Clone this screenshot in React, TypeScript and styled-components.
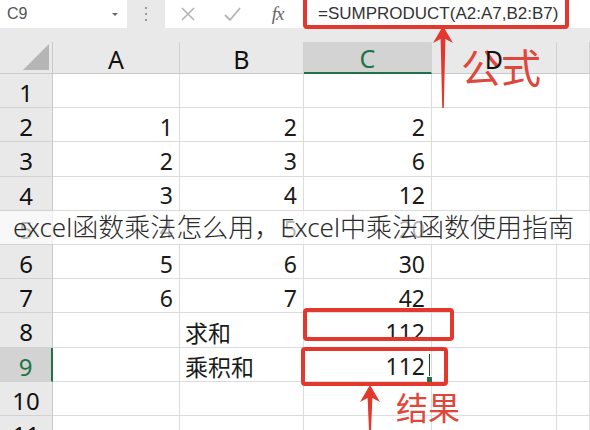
import React from 'react';
import styled, { createGlobalStyle } from 'styled-components';

const GlobalStyle = createGlobalStyle`
  html, body {
    margin: 0;
    padding: 0;
    background: #fff;
  }
`;

const CJK = `"Noto Sans", "Noto Sans CJK SC", sans-serif`;
const GREEN = '#217346';
const RED = '#e2382e';

const Page = styled.div`
  position: relative;
  width: 590px;
  height: 430px;
  overflow: hidden;
  background: #fff;
  font-family: ${CJK};
`;

const FormulaBar = styled.div`
  display: flex;
  align-items: flex-start;
  height: 42px;
  background: #e9e9e9;
`;

const NameBox = styled.div`
  display: flex;
  align-items: center;
  justify-content: space-between;
  box-sizing: border-box;
  width: 127px;
  height: 28px;
  padding: 0 9px 0 7px;
  background: #fff;
  font-family: 'Liberation Sans', Arial, sans-serif;
  font-size: 16px;
  color: #555;
`;

const DropArrow = styled.span`
  width: 0;
  height: 0;
  border-left: 3px solid transparent;
  border-right: 3px solid transparent;
  border-top: 3px solid #666;
`;

const Grip = styled.div`
  display: flex;
  flex-direction: column;
  align-items: center;
  justify-content: center;
  gap: 4px;
  width: 38px;
  height: 28px;

  span {
    width: 2px;
    height: 2px;
    background: #9a9a9a;
  }
`;

const FormulaInput = styled.div`
  flex: 1;
  display: flex;
  align-items: center;
  height: 28px;
  background: #fff;
`;

const BarButton = styled.div<{ $dark?: boolean }>`
  display: flex;
  align-items: center;
  justify-content: center;
  width: 45px;
  height: 28px;
  color: ${(p) => (p.$dark ? '#666' : '#b4b4b4')};
`;

const Fx = styled.span`
  font-family: 'Liberation Serif', 'Times New Roman', serif;
  font-style: italic;
  font-size: 19px;
  letter-spacing: -1px;
`;

const FormulaText = styled.div`
  padding-left: 18px;
  font-family: 'Liberation Sans', Arial, sans-serif;
  font-size: 17px;
  color: #333;
`;

const Sheet = styled.div`
  display: grid;
  grid-template-columns: 53px 127px 124px 128px 125px 1fr;
  grid-auto-rows: 34.2px;
  grid-template-rows: 32px;
`;

const Corner = styled.div`
  position: relative;
  background: #e9e9e9;
  border-right: 1px solid #c9c9c9;
  border-bottom: 1px solid #c9c9c9;

  &::after {
    content: '';
    position: absolute;
    right: 3px;
    bottom: 3px;
    border-left: 26px solid transparent;
    border-bottom: 26px solid #b5b5b5;
  }
`;

const ColHead = styled.div<{ $active?: boolean }>`
  display: flex;
  align-items: center;
  justify-content: center;
  box-sizing: border-box;
  padding-top: 2px;
  background: ${(p) => (p.$active ? '#d3d3d3' : '#e9e9e9')};
  border-right: 1px solid #d2d2d2;
  border-bottom: ${(p) => (p.$active ? `2px solid ${GREEN}` : '1px solid #c9c9c9')};
  font-size: 25px;
  color: ${(p) => (p.$active ? GREEN : '#111')};
`;

// header letters sit above the red annotation text, as in the screenshot
const HeadText = styled.span`
  position: relative;
  z-index: 3;
`;

const RowHead = styled.div<{ $active?: boolean }>`
  display: flex;
  align-items: center;
  justify-content: center;
  box-sizing: border-box;
  padding-top: 4px;
  background: ${(p) => (p.$active ? '#d3d3d3' : '#e9e9e9')};
  border-right: ${(p) => (p.$active ? `2px solid ${GREEN}` : '1px solid #c9c9c9')};
  border-bottom: 1px solid #d2d2d2;
  font-size: 24px;
  color: ${(p) => (p.$active ? GREEN : '#111')};
`;

const Cell = styled.div<{ $left?: boolean }>`
  position: relative;
  display: flex;
  align-items: center;
  justify-content: ${(p) => (p.$left ? 'flex-start' : 'flex-end')};
  box-sizing: border-box;
  padding: 4px 6px 0 5px;
  border-right: 1px solid #dcdcdc;
  border-bottom: 1px solid #dcdcdc;
  font-size: 23px;
  color: #1a1a1a;
  white-space: nowrap;
`;

const Caret = styled.span`
  position: absolute;
  right: 1px;
  top: 6px;
  width: 1.5px;
  height: 24px;
  background: #1d4d33;
`;

const FillHandle = styled.span`
  position: absolute;
  right: -2px;
  bottom: -2px;
  width: 5px;
  height: 5px;
  background: ${GREEN};
  border: 1px solid #fff;
`;

const RedBox = styled.div<{ $x: number; $y: number; $w: number; $h: number }>`
  position: absolute;
  z-index: 4;
  left: ${(p) => p.$x}px;
  top: ${(p) => p.$y}px;
  width: ${(p) => p.$w}px;
  height: ${(p) => p.$h}px;
  box-sizing: border-box;
  border: 4px solid ${RED};
  border-radius: 4px;
`;

const Label = styled.div<{ $x: number; $y: number; $size: number }>`
  position: absolute;
  z-index: 2;
  left: ${(p) => p.$x}px;
  top: ${(p) => p.$y}px;
  font-family: "Noto Sans CJK SC", sans-serif;
  font-size: ${(p) => p.$size}px;
  line-height: 1;
  color: #e0473c;
`;

const ArrowWrap = styled.svg<{ $x: number; $y: number }>`
  position: absolute;
  z-index: 4;
  left: ${(p) => p.$x}px;
  top: ${(p) => p.$y}px;
`;

const Banner = styled.div`
  position: absolute;
  z-index: 6;
  left: 0;
  right: 0;
  top: 211px;
  height: 33px;
  padding-left: 13px;
  background: rgba(255, 255, 255, 0.68);
  font-family: ${CJK};
  font-size: 26px;
  font-weight: 300;
  line-height: 33px;
  color: #2b2b2b;
  white-space: nowrap;
`;

const rows: string[][] = [
  ['', '', ''],
  ['1', '2', '2'],
  ['2', '3', '6'],
  ['3', '4', '12'],
  ['4', '5', '20'],
  ['5', '6', '30'],
  ['6', '7', '42'],
  ['', '求和', '112'],
  ['', '乘积和', '112'],
  ['', '', ''],
  ['', '', ''],
];

const isText = (v: string) => v !== '' && isNaN(Number(v));

function Arrow({ x, y, h }: { x: number; y: number; h: number }) {
  return (
    <ArrowWrap $x={x} $y={y} width="24" height={h} viewBox={`0 0 24 ${h}`}>
      <path
        d={`M12 0 L22 17 L14.4 13 L12.8 ${h} L11.2 ${h} L9.6 13 L2 17 Z`}
        fill={RED}
      />
    </ArrowWrap>
  );
}

export default function App() {
  return (
    <Page>
      <GlobalStyle />
      <FormulaBar>
        <NameBox>
          C9
          <DropArrow />
        </NameBox>
        <Grip>
          <span />
          <span />
          <span />
        </Grip>
        <FormulaInput>
          <BarButton>
            <svg width="14" height="14" viewBox="0 0 14 14">
              <path d="M1 1 L13 13 M13 1 L1 13" stroke="currentColor" strokeWidth="1.6" />
            </svg>
          </BarButton>
          <BarButton>
            <svg width="17" height="14" viewBox="0 0 17 14">
              <path d="M1 8 L6 13 L16 1" stroke="currentColor" strokeWidth="1.8" fill="none" />
            </svg>
          </BarButton>
          <BarButton $dark>
            <Fx>fx</Fx>
          </BarButton>
          <FormulaText>=SUMPRODUCT(A2:A7,B2:B7)</FormulaText>
        </FormulaInput>
      </FormulaBar>

      <Sheet>
        <Corner />
        {['A', 'B', 'C', 'D', ''].map((c) => (
          <ColHead key={c || 'E'} $active={c === 'C'}>
            <HeadText>{c}</HeadText>
          </ColHead>
        ))}
        {rows.map((r, i) => (
          <React.Fragment key={i}>
            <RowHead $active={i === 8}>{i + 1}</RowHead>
            <Cell>{r[0]}</Cell>
            <Cell $left={isText(r[1])}>{r[1]}</Cell>
            <Cell>
              {r[2]}
              {i === 8 && (
                <>
                  <Caret />
                  <FillHandle />
                </>
              )}
            </Cell>
            <Cell />
            <Cell />
          </React.Fragment>
        ))}
      </Sheet>

      <RedBox $x={303} $y={-4} $w={266} $h={33} />
      <Arrow x={431} y={26} h={82} />
      <Label $x={461} $y={46} $size={40}>公式</Label>

      <RedBox $x={303} $y={308} $w={151} $h={33} />
      <RedBox $x={301} $y={347} $w={147} $h={39} />
      <Arrow x={358} y={385} h={50} />
      <Label $x={396} $y={390} $size={32}>结果</Label>

      <Banner>excel函数乘法怎么用，Excel中乘法函数使用指南</Banner>
    </Page>
  );
}
